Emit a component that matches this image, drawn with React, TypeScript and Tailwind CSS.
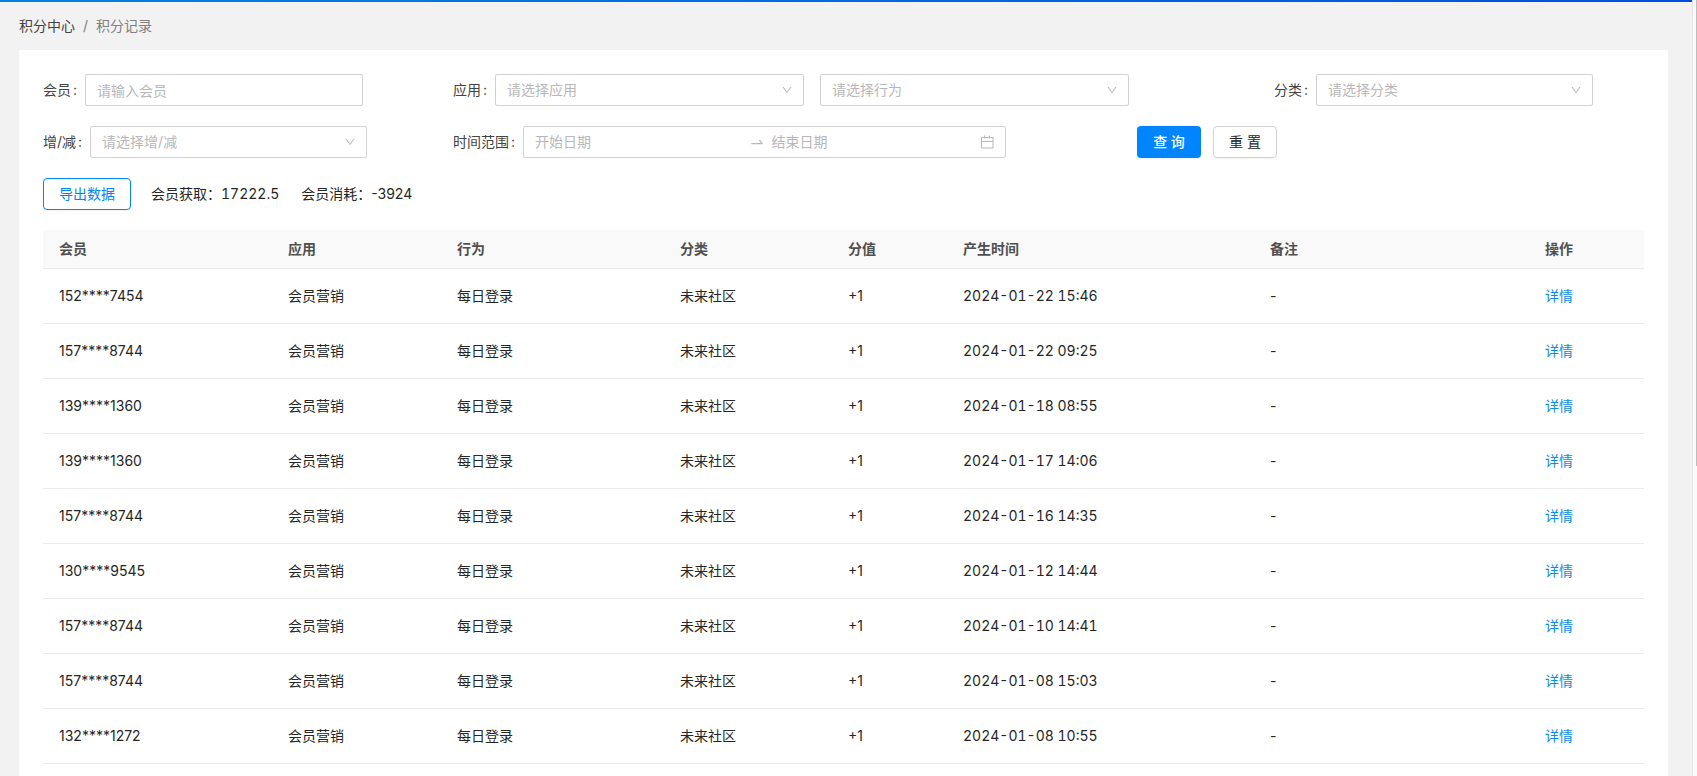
import { useState } from 'react';
import type { ReactNode } from 'react';
import { AiOutlineDown, AiOutlineSwapRight } from 'react-icons/ai';
import clsx from 'clsx';

interface PointRecord {
  id: number;
  member: string;
  app: string;
  action: string;
  category: string;
  score: string;
  createdAt: string;
  remark: string;
}

const columns = [
  { title: '会员', width: 'w-[229px]' },
  { title: '应用', width: 'w-[169px]' },
  { title: '行为', width: 'w-[223px]' },
  { title: '分类', width: 'w-[168px]' },
  { title: '分值', width: 'w-[115px]' },
  { title: '产生时间', width: 'w-[307px]' },
  { title: '备注', width: 'w-[275px]' },
  { title: '操作', width: 'w-[115px]' },
];

const records: PointRecord[] = [
  ['152****7454', '2024-01-22 15:46'],
  ['157****8744', '2024-01-22 09:25'],
  ['139****1360', '2024-01-18 08:55'],
  ['139****1360', '2024-01-17 14:06'],
  ['157****8744', '2024-01-16 14:35'],
  ['130****9545', '2024-01-12 14:44'],
  ['157****8744', '2024-01-10 14:41'],
  ['157****8744', '2024-01-08 15:03'],
  ['132****1272', '2024-01-08 10:55'],
].map(([member, createdAt], index) => ({
  id: index + 1,
  member,
  app: '会员营销',
  action: '每日登录',
  category: '未来社区',
  score: '+1',
  createdAt,
  remark: '-',
}));

function CalendarIcon({ className }: { className?: string }) {
  return (
    <svg viewBox="0 0 14 14" fill="none" stroke="currentColor" className={className} aria-hidden="true">
      <path d="M1.5 2.5h11.5v10.5h-11.5zM1.5 6.5h11.5M4.5 0.5v3M9.5 0.5v3" />
    </svg>
  );
}

function FormItem({ label, htmlFor, children }: { label: string; htmlFor: string; children: ReactNode }) {
  return (
    <div className="flex items-center">
      <label htmlFor={htmlFor} className="shrink-0 text-[#434343]">
        {label}
        <span className="ml-0.5 mr-2">:</span>
      </label>
      {children}
    </div>
  );
}

interface SelectProps {
  id: string;
  placeholder: string;
  options: string[];
  className?: string;
  ariaLabel?: string;
}

function Select({ id, placeholder, options, className, ariaLabel }: SelectProps) {
  const [value, setValue] = useState('');

  return (
    <div className={clsx('relative', className)}>
      <select
        id={id}
        aria-label={ariaLabel}
        value={value}
        onChange={(e) => setValue(e.target.value)}
        className={clsx(
          'h-8 w-full appearance-none rounded-xs border border-[#d2d2d2] bg-white pl-[11px] pr-8 outline-none focus:border-[#0085ff]',
          value ? 'text-[#262626]' : 'text-[#b8b8b8]'
        )}
      >
        <option value="">{placeholder}</option>
        {options.map((option) => (
          <option key={option} value={option}>{option}</option>
        ))}
      </select>
      <AiOutlineDown className="pointer-events-none absolute right-[11px] top-[10px] size-3 text-[#b8b8b8]" />
    </div>
  );
}

export default function App() {
  return (
    <div className="flex h-screen overflow-hidden bg-[#f2f2f2] font-['Inter','Noto_Sans_CJK_SC',sans-serif] text-sm leading-[22px] text-[#262626]">
      <div className="flex min-w-0 flex-1 flex-col">
        <div className="h-0.5 shrink-0 bg-linear-to-r from-[#0082e0] to-[#004ee0]" />

        {/* Breadcrumb */}
        <nav className="flex h-12 shrink-0 items-center px-[19px] text-[#808080]">
          <a href="#points" className="text-[#434343]">积分中心</a>
          <span className="mx-2">/</span>
          <span>积分记录</span>
        </nav>

        <main className="ml-[19px] mr-6 flex-1 bg-white p-6">
          {/* Filters */}
          <form className="space-y-5" onSubmit={(e) => e.preventDefault()}>
            <div className="grid grid-cols-[410fr_821fr_370fr]">
              <FormItem label="会员" htmlFor="member">
                <input
                  id="member"
                  type="text"
                  placeholder="请输入会员"
                  className="h-8 w-[278px] rounded-xs border border-[#d2d2d2] bg-white px-[11px] outline-none placeholder:text-[#b8b8b8] focus:border-[#0085ff]"
                />
              </FormItem>
              <FormItem label="应用" htmlFor="app">
                <div className="flex gap-4">
                  <Select id="app" placeholder="请选择应用" options={['会员营销']} className="w-[309px]" />
                  <Select id="action" ariaLabel="行为" placeholder="请选择行为" options={['每日登录']} className="w-[309px]" />
                </div>
              </FormItem>
              <FormItem label="分类" htmlFor="category">
                <Select id="category" placeholder="请选择分类" options={['未来社区']} className="w-[277px]" />
              </FormItem>
            </div>

            <div className="grid grid-cols-[410fr_684fr_507fr]">
              <FormItem label="增/减" htmlFor="direction">
                <Select id="direction" placeholder="请选择增/减" options={['增', '减']} className="w-[277px]" />
              </FormItem>
              <FormItem label="时间范围" htmlFor="start">
                <div className="flex h-8 w-[483px] items-center rounded-xs border border-[#d2d2d2] bg-white px-[11px] text-[#b8b8b8]">
                  <input
                    id="start"
                    type="text"
                    placeholder="开始日期"
                    className="min-w-0 flex-1 text-[#262626] outline-none placeholder:text-[#b8b8b8]"
                  />
                  <AiOutlineSwapRight className="mx-[7px] size-4 shrink-0" />
                  <input
                    id="end"
                    type="text"
                    aria-label="结束日期"
                    placeholder="结束日期"
                    className="min-w-0 flex-1 text-[#262626] outline-none placeholder:text-[#b8b8b8]"
                  />
                  <CalendarIcon className="ml-0.5 size-3.5 shrink-0" />
                </div>
              </FormItem>
              <div className="flex gap-3">
                <button type="submit" className="h-8 w-16 rounded-sm bg-[#0085ff] font-medium text-white shadow-xs">
                  查 询
                </button>
                <button type="reset" className="h-8 w-16 rounded-sm border border-[#d2d2d2] bg-white shadow-xs">
                  重 置
                </button>
              </div>
            </div>
          </form>

          {/* Export and totals */}
          <div className="my-5 flex items-center">
            <button type="button" className="h-8 rounded-sm border border-[#0085ff] bg-white px-[15px] text-[#0085ff] shadow-xs">
              导出数据
            </button>
            <span className="ml-5 tabular-nums">会员获取：17222.5</span>
            <span className="ml-[22px]">会员消耗：-3924</span>
          </div>

          {/* Records */}
          <table className="w-full table-fixed border-separate border-spacing-0 text-left">
            <thead>
              <tr>
                {columns.map((column) => (
                  <th
                    key={column.title}
                    className={clsx(
                      'border-b border-[#ebebeb] bg-[#f9f9f9] px-4 py-2 font-semibold text-[#505050] first:rounded-tl-xs last:rounded-tr-xs',
                      column.width
                    )}
                  >
                    {column.title}
                  </th>
                ))}
              </tr>
            </thead>
            <tbody>
              {records.map((record) => (
                <tr key={record.id}>
                  <td className="border-b border-[#ebebeb] p-4">{record.member}</td>
                  <td className="border-b border-[#ebebeb] p-4">{record.app}</td>
                  <td className="border-b border-[#ebebeb] p-4">{record.action}</td>
                  <td className="border-b border-[#ebebeb] p-4">{record.category}</td>
                  <td className="border-b border-[#ebebeb] p-4">{record.score}</td>
                  <td className="border-b border-[#ebebeb] p-4 tabular-nums">{record.createdAt}</td>
                  <td className="border-b border-[#ebebeb] p-4">{record.remark}</td>
                  <td className="border-b border-[#ebebeb] p-4">
                    <a href={`#record-${record.id}`} className="text-[#0a8de4]">详情</a>
                  </td>
                </tr>
              ))}
            </tbody>
          </table>
        </main>
      </div>

      {/* Scroll track */}
      <div className="flex w-[5px] shrink-0 justify-end border-l border-[#e4e4e4] bg-[#fafafa]">
        <div className="h-3/5 w-px bg-[#bdbdbd]" />
      </div>
    </div>
  );
}
